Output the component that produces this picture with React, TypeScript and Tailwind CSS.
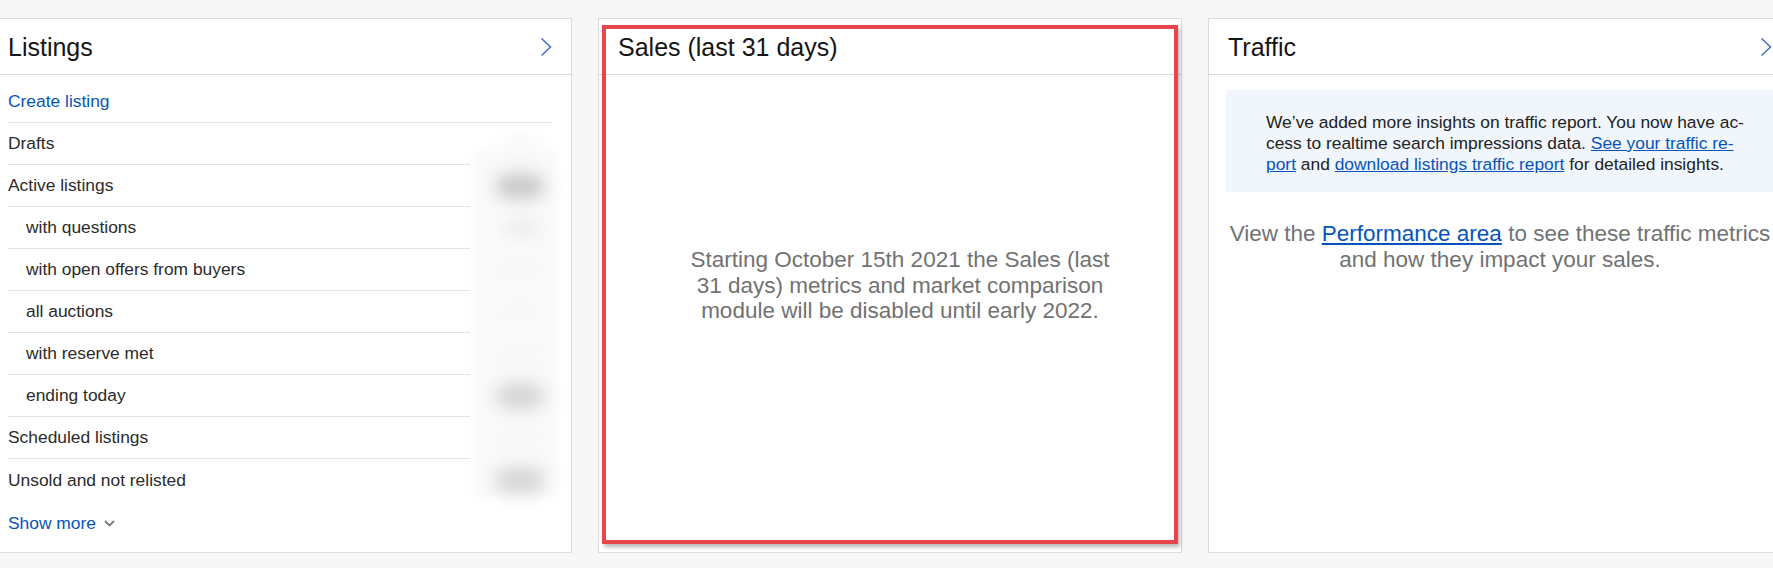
import React from "react";

const Chevron = () => (
  <svg width="12" height="20" viewBox="0 0 12 20" fill="none">
    <path d="M1.5 1.5 L10.5 10 L1.5 18.5" stroke="#4a72c4" strokeWidth="1.6" strokeLinejoin="miter" />
  </svg>
);

type Row = { label: string; indent?: boolean; link?: boolean; blob?: number };

const rows: Row[] = [
  { label: "Create listing", link: true },
  { label: "Drafts", blob: 0 },
  { label: "Active listings", blob: 3 },
  { label: "with questions", indent: true, blob: 1 },
  { label: "with open offers from buyers", indent: true, blob: 0 },
  { label: "all auctions", indent: true, blob: 0 },
  { label: "with reserve met", indent: true, blob: 0 },
  { label: "ending today", indent: true, blob: 2 },
  { label: "Scheduled listings", blob: 0 },
  { label: "Unsold and not relisted", blob: 2 },
];

function Blob({ level }: { level: number }) {
  if (level === 3)
    return <div className="ml-[26px] h-[22px] w-[48px] rounded-full bg-[#c2c2c2] blur-[9px]" />;
  if (level === 2)
    return <div className="ml-[26px] h-[22px] w-[48px] rounded-full bg-[#cfcfcf] blur-[9px]" />;
  if (level === 1)
    return <div className="ml-[34px] h-[16px] w-[36px] rounded-full bg-[#ebebeb] blur-[8px]" />;
  return <div className="ml-[30px] h-[16px] w-[40px] rounded-full bg-[#f7f7f7] blur-[8px]" />;
}

function Header({ title, chevron }: { title: string; chevron?: boolean }) {
  return (
    <div className="flex h-[56px] items-center justify-between border-b border-[#d9d9d9] pl-[19px] pr-[19px] pt-[1px]">
      <span className="text-[25px] leading-none text-[#151515]">{title}</span>
      {chevron && <Chevron />}
    </div>
  );
}

export default function App() {
  return (
    <div className="h-[568px] w-[1773px] overflow-hidden bg-[#f7f7f7] font-['Liberation_Sans',Arial,sans-serif]">
      <div className="ml-[-12px] flex gap-[26px] pt-[18px]">
        {/* Listings */}
        <div className="relative flex h-[535px] w-[584px] shrink-0 flex-col border border-[#dcdcdc] bg-white">
          <Header title="Listings" chevron />
          <div className="relative flex flex-col px-[19px] pt-[6px]">
            <div className="pointer-events-none absolute left-[485px] top-[74px] h-[350px] w-[83px] bg-[#fafafa] blur-[5px]" />
            {rows.map((r, i) => {
              const last = i === rows.length - 1;
              if (r.link) {
                return (
                  <div key={r.label} className="flex h-[42px] items-center border-b border-[#e3e3e3] text-[17.4px] text-[#0654ba]">
                    {r.label}
                  </div>
                );
              }
              return (
                <div key={r.label} className="relative flex h-[42px]">
                  <div
                    className={`flex flex-1 items-center text-[17.4px] text-[#2b2b2b] ${
                      last ? "" : "border-b border-[#e3e3e3]"
                    } ${r.indent ? "pl-[18px]" : ""}`}
                  >
                    {r.label}
                  </div>
                  <div className="relative flex w-[82px] items-center">
                    <Blob level={r.blob ?? 0} />
                  </div>
                </div>
              );
            })}
            <div className="mt-[12px] flex items-center gap-[8px] text-[17.4px] leading-[20px] text-[#0654ba]">
              <span>Show more</span>
              <svg width="11" height="7" viewBox="0 0 11 7" fill="none">
                <path d="M1 1 L5.5 5.5 L10 1" stroke="#7a7a7a" strokeWidth="1.8" />
              </svg>
            </div>
          </div>
        </div>

        {/* Sales */}
        <div className="relative flex h-[535px] w-[584px] shrink-0 flex-col border border-[#dcdcdc] bg-white">
          <Header title="Sales (last 31 days)" />
          <div className="flex justify-center pl-[20px] pt-[172px]">
            <p className="w-[436px] text-center text-[22.5px] leading-[25.7px] text-[#727272]">
              Starting October 15th 2021 the Sales (last 31 days) metrics and market comparison module will be disabled until early 2022.
            </p>
          </div>
          <div className="pointer-events-none absolute bottom-[8px] left-[3px] right-[3px] top-[6px] border-4 border-[#e7474c] shadow-[2px_3px_4px_rgba(0,0,0,0.28)]" />
        </div>

        {/* Traffic */}
        <div className="relative flex h-[535px] w-[584px] shrink-0 flex-col border border-[#dcdcdc] bg-white">
          <Header title="Traffic" chevron />
          <div className="flex flex-col px-[17px] pt-[15px]">
            <div className="bg-[#f0f6fc] pb-[17px] pl-[40px] pr-[20px] pt-[22px] text-[17.4px] leading-[21px] text-[#222222]">
              <div className="whitespace-nowrap">We’ve added more insights on traffic report. You now have ac-</div>
              <div className="whitespace-nowrap">
                cess to realtime search impressions data.{" "}
                <span className="text-[#0654ba] underline">See your traffic re-</span>
              </div>
              <div className="whitespace-nowrap">
                <span className="text-[#0654ba] underline">port</span> and{" "}
                <span className="text-[#0654ba] underline">download listings traffic report</span> for detailed insights.
              </div>
            </div>
            <div className="mt-[29px] text-center text-[22.5px] leading-[26px] text-[#727272]">
              <div className="whitespace-nowrap">
                View the <span className="text-[#0654ba] underline">Performance area</span> to see these traffic metrics
              </div>
              <div className="whitespace-nowrap">and how they impact your sales.</div>
            </div>
          </div>
        </div>
      </div>
    </div>
  );
}
